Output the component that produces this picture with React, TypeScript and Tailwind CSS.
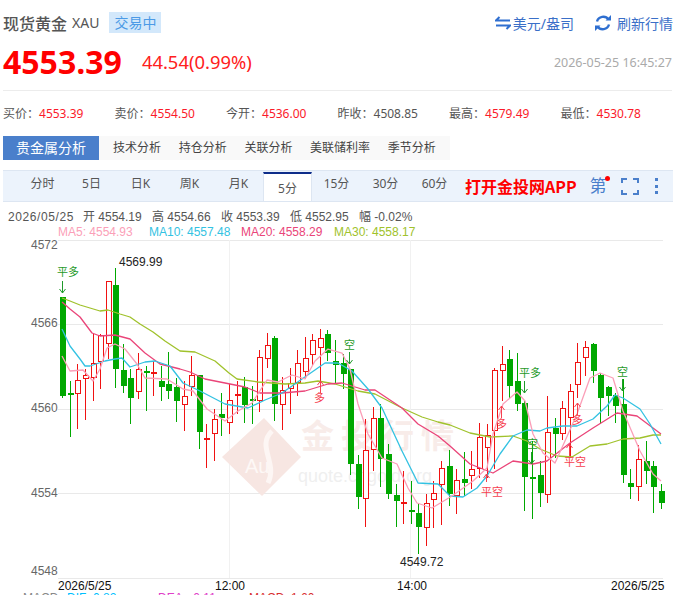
const F = '"Noto Sans","Noto Sans CJK SC",sans-serif';
type C = [number, number, number, number, number];
const candles: C[] = [
[0,296,296,395,397],[0,380,392,393,436],[1,363,379,392,428],[1,368,374,377,419],[1,333,362,376,400],[1,333,334,360,388],[1,280,280,342,358],[0,267,284,368,387],[0,343,369,385,392],[0,368,377,397,423],
[1,352,368,390,398],[0,365,370,372,410],[1,360,371,372,395],[0,365,380,386,400],[0,351,383,390,398],[0,377,386,400,421],[1,380,395,403,430],[1,355,374,385,395],[0,374,374,431,448],[1,423,437,438,467],
[1,408,418,432,460],[0,392,413,417,435],[1,383,399,421,433],[1,380,393,394,413],[0,376,386,404,422],[0,385,398,399,423],[1,349,356,399,411],[1,332,344,357,367],[0,335,337,403,420],[1,376,389,403,429],
[1,367,382,387,413],[1,349,362,381,395],[1,336,357,370,378],[1,333,339,353,365],[1,328,337,346,392],[0,329,333,352,360],[0,339,360,364,383],[0,353,362,373,388],[0,368,368,463,474],[0,454,463,496,508],
[1,418,449,497,526],[1,406,417,448,470],[0,403,417,458,486],[0,443,453,493,498],[0,483,494,500,526],[1,470,501,502,523],[0,480,509,510,523],[0,502,512,526,553],[1,493,502,526,545],[1,480,492,498,527],
[1,460,467,483,524],[0,449,465,493,505],[1,468,479,494,513],[0,451,478,482,495],[1,450,468,474,488],[1,422,436,467,477],[1,423,434,446,477],[1,367,369,429,468],[1,345,363,369,400],[0,349,358,385,398],
[0,352,380,403,410],[0,400,402,476,510],[0,440,476,477,518],[0,460,474,492,506],[1,395,431,493,502],[0,417,427,433,457],[1,400,407,432,439],[1,383,390,416,457],[1,342,361,383,397],[1,340,346,356,375],
[0,342,343,370,382],[0,372,374,397,423],[0,385,386,395,415],[0,392,394,405,422],[0,378,403,474,482],[0,468,482,486,498],[1,444,458,485,500],[0,440,460,470,483],[0,460,465,486,512],[0,483,490,502,508],
];
const ma30 = "62,297 70,300 80,304 90,307 100,310 108,309 120,313 130,316 140,323 153,331 165,340 180,350 195,351 215,360 229,372 237,378 258,381 285,383 305,382 318,380 335,383 358,390 375,393 402,407 422,416 438,421 450,424 470,432 490,436 513,435 527,440 540,448 557,455 572,456 590,445 607,443 623,438 640,437 653,434 661,434";
const ma20 = "62,301 70,308 80,316 92,332 100,335 115,334 130,338 145,352 160,363 180,368 190,371 205,378 225,382 245,386 260,392 282,392 305,390 328,383 342,382 365,389 375,389 402,407 418,423 438,435 450,445 470,463 493,472 513,460 533,463 547,460 570,442 593,427 617,412 637,415 661,433";
const ma10 = "62,328 70,345 80,358 85,365 90,365 105,360 115,358 122,357 130,366 145,361 155,360 170,365 183,382 200,390 225,403 248,407 265,399 282,392 302,378 325,362 338,362 352,370 368,388 382,407 402,450 418,482 438,483 450,495 463,496 477,487 487,475 500,453 513,435 527,429 540,430 547,427 563,425 577,425 593,418 607,405 615,394 623,397 640,408 650,423 661,443";
const ma5 = "62,355 70,370 83,369 93,380 100,368 107,347 115,343 125,348 137,363 145,377 167,378 183,388 193,390 207,408 225,420 238,410 252,402 267,379 278,381 292,374 305,378 315,360 328,348 342,352 350,368 358,403 368,433 382,457 397,463 408,487 417,502 432,507 452,495 473,480 487,467 493,433 503,403 517,391 525,400 533,433 543,452 555,462 565,440 577,413 590,377 600,372 613,377 623,410 640,450 653,473 661,480";
const GRN = "#1f9a2a", RED = "#f6414f";
function Down({ x, y, h = 12 }: { x: number; y: number; h?: number }) {
  return <path d={`M${x} ${y}V${y + h}M${x - 3} ${y + h - 4}L${x} ${y + h}L${x + 3} ${y + h - 4}`} stroke={GRN} strokeWidth="1" fill="none" />;
}
function Up({ x, y, h = 12 }: { x: number; y: number; h?: number }) {
  return <path d={`M${x} ${y}V${y + h}M${x - 3} ${y + 4}L${x} ${y}L${x + 3} ${y + 4}`} stroke={RED} strokeWidth="1" fill="none" />;
}
function Chart() {
  const cjk = { fontFamily: '"Noto Sans CJK SC",sans-serif', fontSize: 11 };
  return (
    <svg width="676" height="352" viewBox="0 238 676 352" className="block" style={{ fontFamily: '"Liberation Sans",sans-serif' }}>
      {[239, 323, 408, 492, 577].map((y) => <line key={y} x1="58" x2="663" y1={y + 0.5} y2={y + 0.5} stroke="#e9e9e9" />)}
      {[229, 410].map((x) => <line key={x} x1={x + 0.5} x2={x + 0.5} y1="239" y2="577" stroke="#f1f1f1" />)}
      {[["4572", 244], ["4566", 322], ["4560", 407], ["4554", 492], ["4548", 570]].map(([t, y]) => (
        <text key={t} x="31" y={Number(y) + 4} fontSize="12" fill="#666">{t}</text>
      ))}
      {/* watermark */}
      <path d="M264 417L301 456L262 495L222 456Z" fill="#f7e6e2" />
      <path d="M272 430C256 445 278 462 268 482" fill="none" stroke="#fdf6f4" strokeWidth="5" />
      <text x="245" y="472" fontSize="20" fill="#fdf8f6">Au</text>
      <text x="301" y="447" fontSize="33" fontWeight="700" letterSpacing="7" fill="#f8ece9" style={{ fontFamily: '"Noto Sans CJK SC",sans-serif' }}>金投行情</text>
      <text x="298" y="481" fontSize="18" fill="#efefef">quote.cngold.org</text>
      <g shapeRendering="crispEdges">
        {candles.map(([t, hi, top, bot, lo], i) => {
          const x = Math.round(62.3 + 7.575 * i);
          const col = t ? "#f01212" : "#00a800";
          const thin = bot - top < 2;
          return (
            <g key={i}>
              <line x1={x + 0.5} x2={x + 0.5} y1={hi} y2={lo} stroke={col} />
              {thin ? <rect x={x - 2} y={top} width="6" height="2" fill={col} />
                : t ? <rect x={x - 2} y={top + 0.5} width="5" height={bot - top} fill="#fff" stroke={col} />
                : <rect x={x - 2.5} y={top} width="6" height={bot - top} fill={col} />}
            </g>
          );
        })}
      </g>
      <g fill="none" strokeWidth="1.3" strokeLinejoin="round">
        <polyline points={ma30} stroke="#a0c22c" />
        <polyline points={ma20} stroke="#ea4579" />
        <polyline points={ma10} stroke="#33c2e2" />
        <polyline points={ma5} stroke="#fb9fb8" />
      </g>
      <text x="119" y="265" fontSize="12" fill="#222">4569.99</text>
      <text x="400" y="565" fontSize="12" fill="#222">4549.72</text>
      <g style={cjk} fill={GRN}>
        <text x="57" y="275">平多</text>
        <text x="344" y="348">空</text>
        <text x="519" y="376">平多</text>
        <text x="527" y="447">空</text>
        <text x="617" y="375">空</text>
      </g>
      <Down x={62.5} y={280} />
      <Down x={349.5} y={351} />
      <Down x={524.5} y={380} />
      <Down x={531.5} y={451} />
      <Down x={622.5} y={378} />
      <g style={cjk} fill={RED}>
        <text x="314" y="401">多</text>
        <text x="496" y="427">多</text>
        <text x="572" y="423">多</text>
        <text x="481" y="495">平空</text>
        <text x="564" y="465">平空</text>
      </g>
      <Up x={320.5} y={380} />
      <Up x={501.5} y={405} />
      <Up x={577.5} y={402} />
      <Up x={486.5} y={473} h={8} />
      <Up x={569.5} y={443} h={12} />
      <g fontSize="12" fill="#111">
        <text x="58" y="589">2026/5/25</text>
        <text x="215" y="589">12:00</text>
        <text x="397" y="589">14:00</text>
        <text x="611" y="589">2026/5/25</text>
      </g>
    </svg>
  );
}
const stats: [string, string, boolean][] = [
  ["买价", "4553.39", true], ["卖价", "4554.50", true], ["今开", "4536.00", true],
  ["昨收", "4508.85", false], ["最高", "4579.49", true], ["最低", "4530.78", true],
];
const toolbar = ["分时", "5日", "日K", "周K", "月K", "5分", "15分", "30分", "60分"];
const ohlc = ["开 4554.19", "高 4554.66", "收 4553.39", "低 4552.95", "幅 -0.02%"];
export default function App() {
  return (
    <div className="w-[676px] h-[595px] overflow-hidden bg-white" style={{ fontFamily: F }}>
      <div className="h-[46px] pl-[3px] pr-[3px] pt-[12px] flex items-start">
        <span className="text-[16px] leading-[22px] font-medium text-[#555] [font-family:'Noto_Sans_CJK_SC',sans-serif]">现货黄金</span>
        <span className="ml-[5px] text-[14px] leading-[22px] text-[#555]">XAU</span>
        <span className="ml-[10px] w-[52px] h-[21px] bg-[#d3e8fb] text-[#4b9ae6] text-[14px] leading-[21px] text-center">交易中</span>
        <div className="ml-auto flex items-center h-[22px] text-[#3a6fc8] text-[14px]">
          <svg width="16" height="14" viewBox="0 0 16 14" className="mr-[2px]">
            <path d="M4.5 1L1 4.5H15M11.5 13L15 9.5H1" fill="none" stroke="#2f6fd0" strokeWidth="2" />
          </svg>
          <span>美元/盎司</span>
          <svg width="18" height="18" viewBox="0 0 18 18" className="ml-[20px] mr-[5px]">
            <path d="M3 7.5A6.5 6.5 0 0 1 14.5 5.5M15 10.5A6.5 6.5 0 0 1 3.5 12.5" fill="none" stroke="#2f6fd0" strokeWidth="2.4" />
            <path d="M11.5 6.5H17V1ZM6.5 11.5H1V17Z" fill="#2f6fd0" />
          </svg>
          <span>刷新行情</span>
        </div>
      </div>
      <div className="h-[32px] pl-[3px] pr-[4px] flex items-center">
        <span className="text-[32px] leading-[32px] font-bold text-[#ff0000] [font-family:'Open_Sans',sans-serif]">4553.39</span>
        <span className="ml-[20px] text-[18.4px] leading-[24px] text-[#ff2020]">44.54(0.99%)</span>
        <span className="ml-auto text-[12.5px] text-[#aaa] pt-[2px]">2026-05-25 16:45:27</span>
      </div>
      <div className="mt-[12px] ml-[3px] w-[669px] h-[46px] border-t border-[#ececec] grid grid-cols-6 items-center text-[12px]">
        {stats.map(([k, v, r]) => (
          <div key={k} className="whitespace-nowrap text-[#555]">
            {k}：<span className={r ? "text-[#fb1a2a]" : "text-[#555]"}>{v}</span>
          </div>
        ))}
      </div>
      <div className="mx-[3px] w-[447px] h-[24px] bg-[#f9f9f9] flex items-center text-[12px] text-[#444]">
        <div className="w-[96px] h-full bg-[#4a7fcb] text-white text-[14px] leading-[24px] text-center">贵金属分析</div>
        <div className="flex pl-[14px] gap-[17.7px]">
          {["技术分析", "持仓分析", "关联分析", "美联储利率", "季节分析"].map((t) => <span key={t}>{t}</span>)}
        </div>
      </div>
      <div className="mt-[10px] mx-[3px] h-[32px] bg-[#ecf3fc] border-y border-[#dde6f2] flex items-end text-[12px] text-[#555] relative">
        <div className="flex pl-[15px]">
          {toolbar.map((t) => (
            <div key={t} className={t === "5分" ? "w-[49px] h-[29px] bg-white border-t-2 border-[#0e2d8a] border-x border-x-[#dde6f2] -mb-px text-center leading-[29px]" : "w-[49px] h-[29px] text-center leading-[24px]"}>{t}</div>
          ))}
        </div>
        <span className="ml-[6px] self-center text-[16px] font-bold text-[#ff0000] whitespace-nowrap [font-family:'Noto_Sans_CJK_SC',sans-serif]">打开金投网APP</span>
        <span className="ml-[13px] self-center text-[17px] text-[#4a7fcb] relative">第
          <span className="absolute -right-[3px] top-[3px] w-[5px] h-[5px] rounded-full bg-[#ff0000]" />
        </span>
        <svg width="18" height="17" viewBox="0 0 18 17" className="ml-[14px] self-center">
          <path d="M1 5V1H6M12 1H17V5M17 12V16H12M6 16H1V12" fill="none" stroke="#4a7fcb" strokeWidth="2" />
        </svg>
        <div className="ml-[16px] self-center flex flex-col gap-[3.5px]">
          {[0, 1, 2].map((i) => <span key={i} className="block w-[3px] h-[3px] bg-[#4a7fcb]" />)}
        </div>
      </div>
      <div className="h-[14px] mt-[8px] pl-[8px] flex gap-[9px] text-[12px] leading-[14px] text-[#555] whitespace-pre [font-family:'Liberation_Sans','Noto_Sans_CJK_SC',sans-serif]">
        <span className="w-[66px] tracking-[0.6px]">2026/05/25</span>
        {ohlc.map((t) => <span key={t} className="w-[60px]">{t}</span>)}
      </div>
      <div className="h-[15px] pl-[58px] flex text-[12px] leading-[16px] [font-family:'Liberation_Sans',sans-serif]">
        <span className="w-[91px] text-[#fb9fb8]">MA5: 4554.93</span>
        <span className="w-[92px] text-[#33c2e2]">MA10: 4557.48</span>
        <span className="w-[93px] text-[#ea4579]">MA20: 4558.29</span>
        <span className="text-[#a0c22c]">MA30: 4558.17</span>
      </div>
      <Chart />
      <div className="pl-[23px] flex text-[12px] leading-[14px] [font-family:'Liberation_Sans',sans-serif]">
        <span className="w-[44px] text-[#888]">MACD</span>
        <span className="w-[91px] text-[#00bfff]">DIF: 0.82</span>
        <span className="w-[91px] text-[#e040c8]">DEA: -0.11</span>
        <span className="text-[#d83030]">MACD: 1.60</span>
      </div>
    </div>
  );
}
